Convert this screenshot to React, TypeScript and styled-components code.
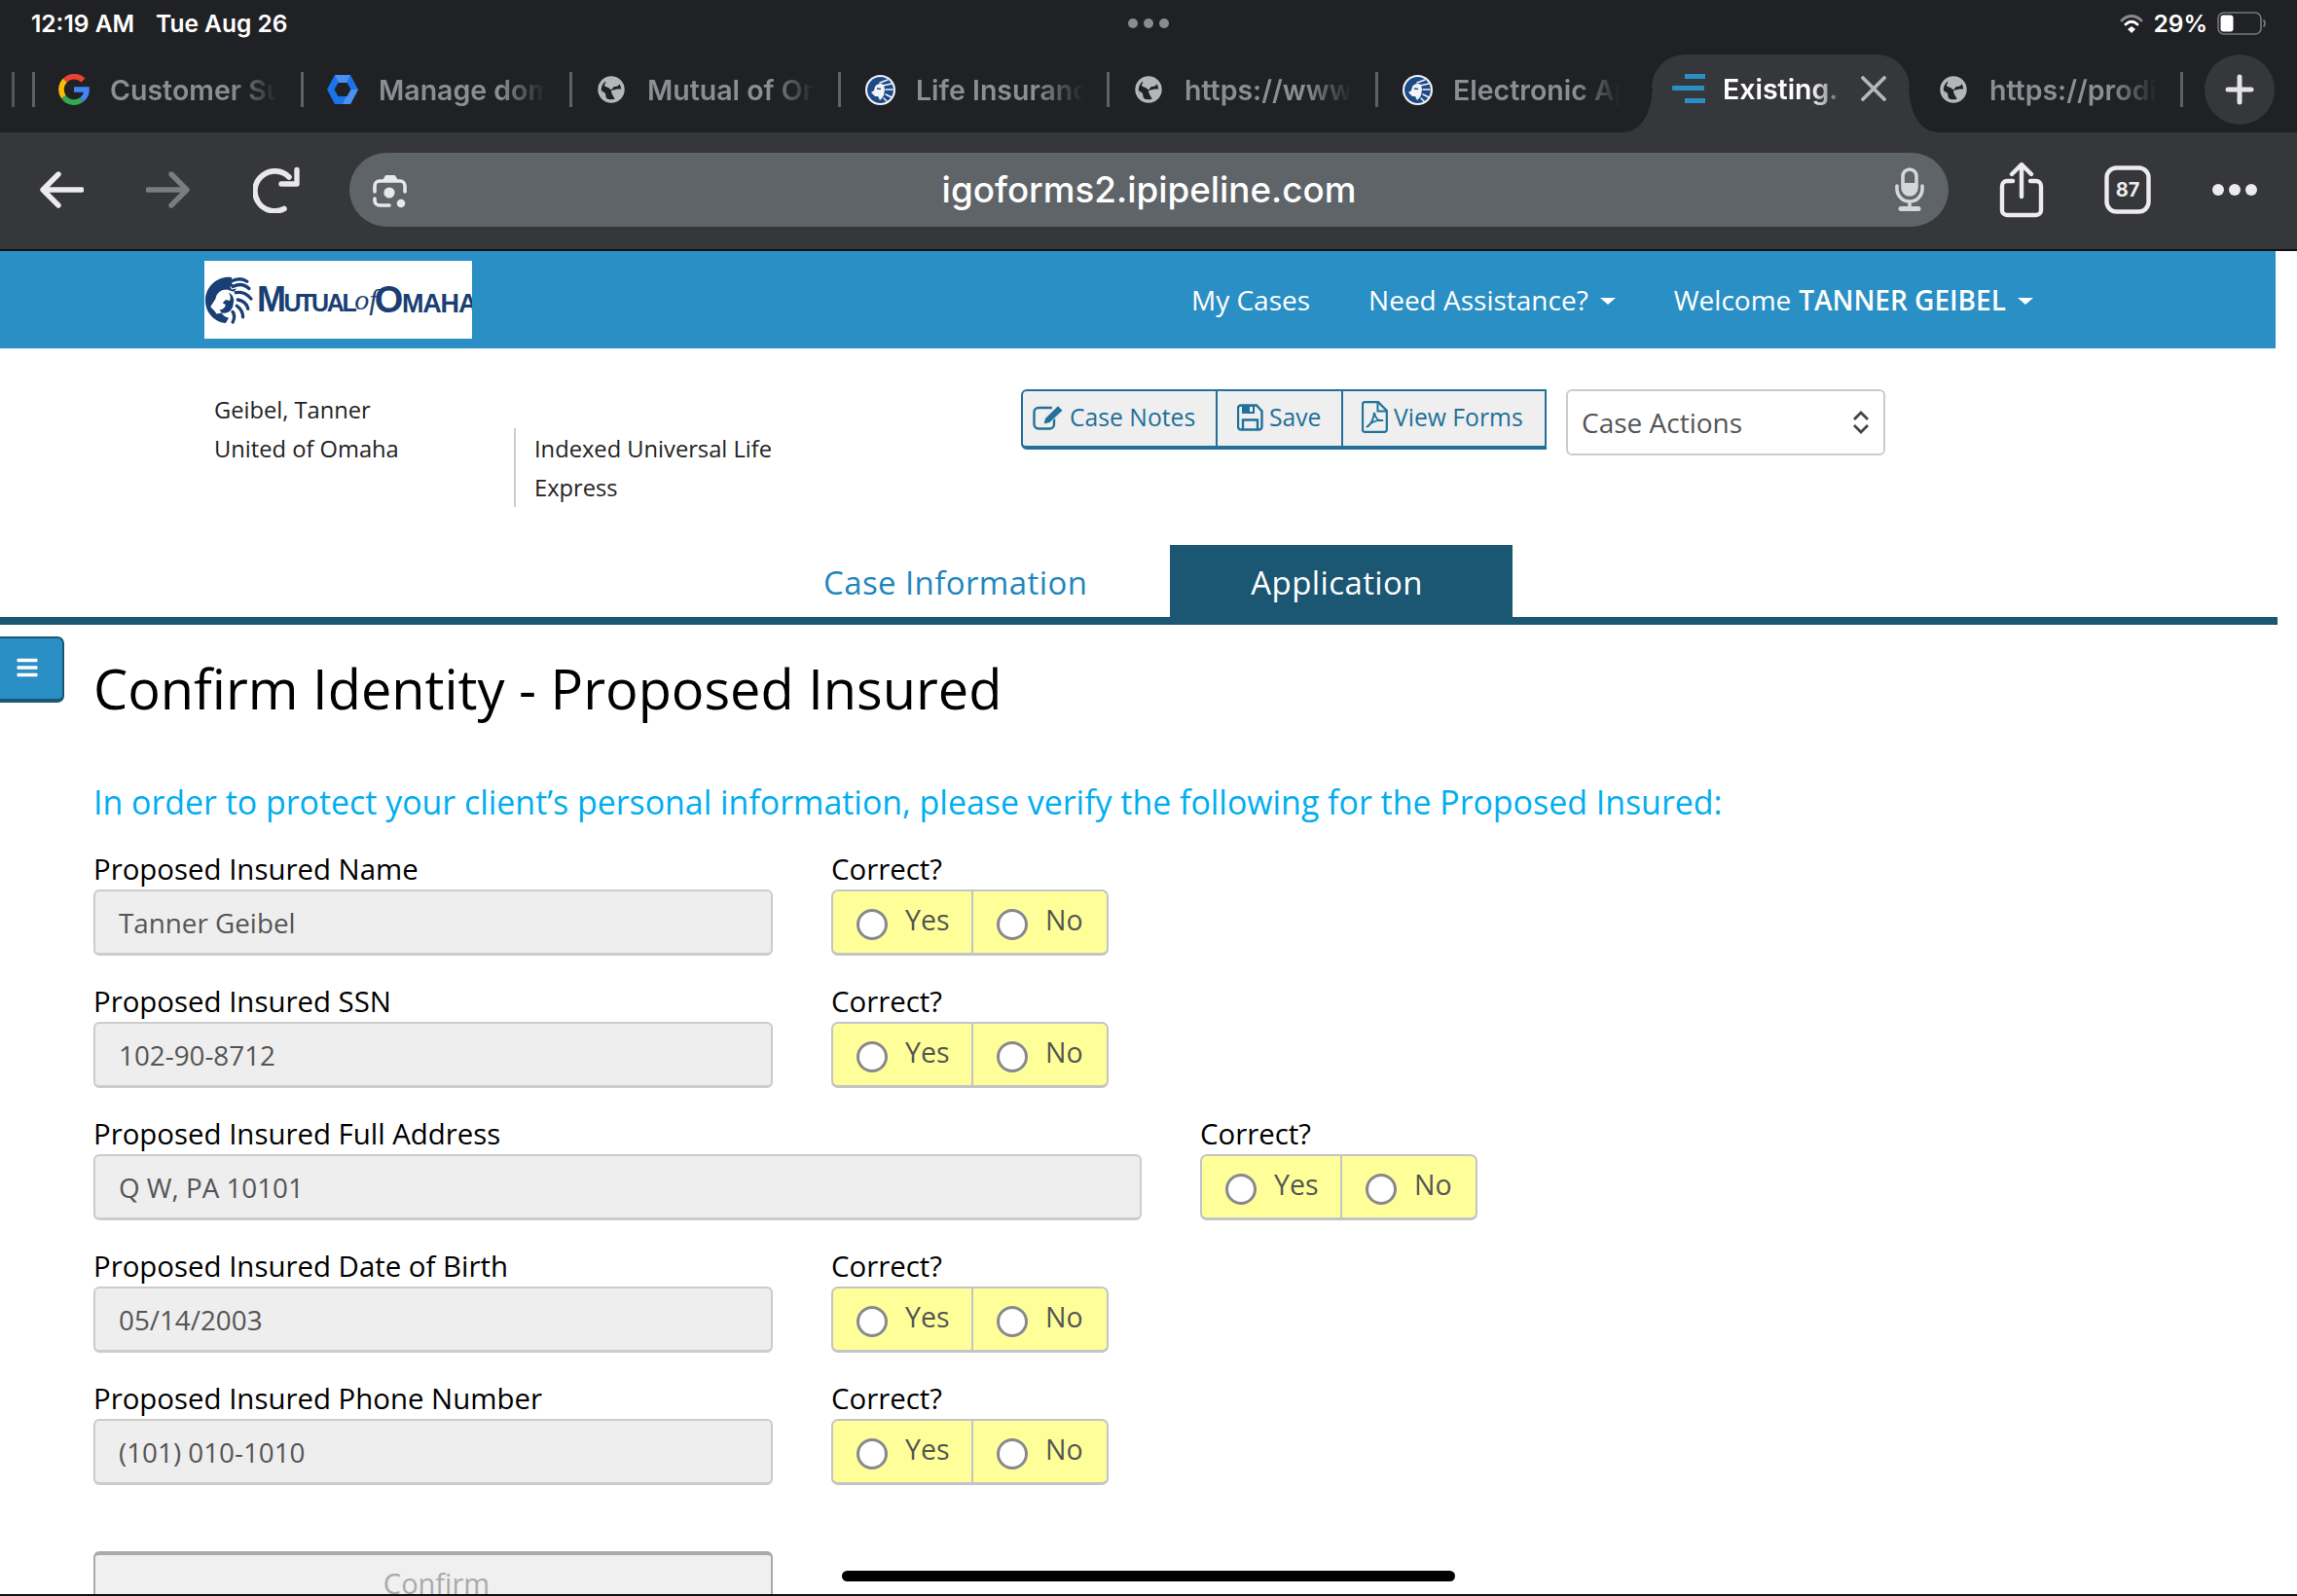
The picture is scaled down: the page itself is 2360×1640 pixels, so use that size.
import React from "react";
import styled, { createGlobalStyle } from "styled-components";
import { FaBars } from "react-icons/fa";

const Global = createGlobalStyle`
  html, body { margin: 0; padding: 0; background: #fff; overflow: hidden; }
  * { box-sizing: border-box; }
  svg { flex: none; display: block; }
`;

const SF = `Inter, "Liberation Sans", sans-serif`;
const OS = `"Open Sans", "Noto Sans", sans-serif`;
const NAVY = "#1a3f74";
const BTN = "#21719b";

const Root = styled.div`
  position: relative;
  width: 2360px;
  height: 1640px;
  overflow: hidden;
  background: #fff;
  font-family: ${OS};
`;
const StatusBar = styled.div`
  height: 48px;
  background: #202125;
  display: grid;
  grid-template-columns: 1fr auto 1fr;
  align-items: center;
  padding: 0 32px;
  color: #fff;
  font: 600 24.5px ${SF};
`;
const StatusLeft = styled.div`
  display: flex;
  gap: 22px;
`;
const StatusDots = styled.div`
  display: flex;
  gap: 6px;
`;
const StatusDot = styled.i`
  width: 10px;
  height: 10px;
  border-radius: 50%;
  background: #8a8b8e;
`;
const StatusRight = styled.div`
  display: flex;
  align-items: center;
  justify-content: flex-end;
  gap: 10px;
`;
const TabStrip = styled.div`
  height: 88px;
  background: #202125;
  display: flex;
  align-items: flex-start;
  padding-left: 12px;
`;
const TabStub = styled.div`
  flex: none;
  width: 24px;
  height: 36px;
  margin-top: 26px;
  border-left: 3px solid #55565a;
  border-right: 3px solid #5f6064;
`;
const Tab = styled.div<{ $noSep?: boolean }>`
  flex: none;
  width: 276px;
  height: 36px;
  margin-top: 26px;
  padding-left: 24px;
  display: flex;
  align-items: center;
  gap: 21px;
  border-right: ${(p) => (p.$noSep ? "0" : "3px solid #5f6064")};
  color: #8d8e93;
  font: 600 28.5px ${SF};
`;
const TabIconSlot = styled.span`
  flex: none;
  width: 32px;
  height: 32px;
  display: flex;
  align-items: center;
  justify-content: center;
`;
const TabTitle = styled.span`
  white-space: nowrap;
  -webkit-mask-image: linear-gradient(90deg, #000 125px, rgba(0, 0, 0, 0.45) 152px, transparent 172px);
  mask-image: linear-gradient(90deg, #000 125px, rgba(0, 0, 0, 0.45) 152px, transparent 172px);
`;
const ActiveTab = styled.div`
  position: relative;
  flex: none;
  width: 265px;
  height: 80px;
  margin: 8px 5px 0 5px;
  padding: 0 24px 10px 21px;
  background: #36373a;
  border-radius: 34px 34px 0 0;
  display: flex;
  align-items: center;
  color: #fff;
  font: 600 28.5px ${SF};
  &::before,
  &::after {
    content: "";
    position: absolute;
    bottom: 0;
    width: 28px;
    height: 46px;
  }
  &::before {
    left: -27px;
    background: radial-gradient(ellipse 28px 46px at 0 0, #202125 98%, #36373a 100%);
  }
  &::after {
    right: -27px;
    background: radial-gradient(ellipse 28px 46px at 100% 0, #202125 98%, #36373a 100%);
  }
`;
const ActiveTitle = styled(TabTitle)`
  flex: 1;
  margin-left: 18px;
  -webkit-mask-image: linear-gradient(90deg, #000 90px, rgba(0, 0, 0, 0.35) 115px);
  mask-image: linear-gradient(90deg, #000 90px, rgba(0, 0, 0, 0.35) 115px);
`;
const NewTab = styled.div`
  flex: none;
  width: 72px;
  height: 72px;
  margin: 8px 0 0 22px;
  border-radius: 50%;
  background: #36373a;
  display: flex;
  align-items: center;
  justify-content: center;
`;
const Toolbar = styled.div`
  height: 122px;
  background: #36373a;
  border-bottom: 2px solid #111;
  display: flex;
  align-items: center;
  padding: 0 40px 2px 40px;
`;
const ToolIcon = styled.span<{ $mr: number }>`
  flex: none;
  display: flex;
  margin-right: ${(p) => p.$mr}px;
`;
const AddressBar = styled.div`
  flex: none;
  width: 1643px;
  height: 76px;
  margin-right: 52px;
  border-radius: 38px;
  background: #5f6468;
  display: grid;
  grid-template-columns: 100px 1fr 100px;
  align-items: center;
  color: #fff;
  font: 500 36.8px ${SF};
  text-align: center;
`;
const AddressText = styled.span`
  margin-top: -2px;
`;
const LensSlot = styled.span`
  display: flex;
  padding-left: 23px;
`;
const MicSlot = styled.span`
  display: flex;
  justify-content: flex-end;
  padding-right: 24px;
`;
const SiteHeader = styled.header`
  width: 2338px;
  height: 100px;
  background: #2a8fc4;
  display: flex;
  align-items: center;
  padding-left: 210px;
  color: #fff;
  font-size: 28px;
`;
const Logo = styled.div`
  flex: none;
  width: 275px;
  height: 80px;
  margin-right: 739px;
  background: #fff;
  display: flex;
  align-items: center;
  overflow: hidden;
  white-space: nowrap;
  color: ${NAVY};
`;
const LogoWord = styled.span`
  font: 700 36px "Liberation Sans", sans-serif;
  font-variant: small-caps;
  letter-spacing: -2.4px;
`;
const LogoWordFirst = styled(LogoWord)`
  margin-left: 4px;
`;
const LogoWordLast = styled(LogoWord)`
  font-size: 38px;
  letter-spacing: -1.2px;
`;
const LogoOf = styled.span`
  font: italic 400 30px "Liberation Serif", serif;
  margin: 0 -3px 0 0;
`;
const NavItem = styled.span<{ $mr: number }>`
  margin-right: ${(p) => p.$mr}px;
  display: flex;
  align-items: center;
  white-space: nowrap;
`;
const NavStrong = styled.b`
  margin-left: 0.28em;
  font-weight: 600;
`;
const Caret = styled.i`
  display: inline-block;
  margin-left: 12px;
  margin-top: 3px;
  border-left: 8px solid transparent;
  border-right: 8px solid transparent;
  border-top: 7px solid #fff;
`;
const InfoBar = styled.section`
  height: 202px;
  padding-left: 220px;
  display: flex;
  align-items: flex-start;
  font-size: 23.7px;
  line-height: 40px;
  color: #222;
`;
const InfoName = styled.div`
  flex: none;
  width: 308px;
  padding-top: 43px;
`;
const InfoPlan = styled.div`
  flex: none;
  width: 521px;
  margin-top: 82px;
  padding: 1px 0 0 19px;
  border-left: 2px solid #ccc;
`;
const ActionGroup = styled.div`
  flex: none;
  margin-top: 42px;
  width: 540px;
  height: 62px;
  display: flex;
  background: #efefef;
  border: 2px solid ${BTN};
  border-bottom-width: 4px;
  border-radius: 6px 0 0 6px;
`;
const ActionButton = styled.div<{ $w: number; $pl: number; $last?: boolean }>`
  flex: none;
  width: ${(p) => p.$w}px;
  padding: 0 0 3px ${(p) => p.$pl}px;
  display: flex;
  align-items: center;
  gap: 6px;
  color: #1f6f99;
  font-size: 24.7px;
  font-weight: 500;
  border-right: ${(p) => (p.$last ? "0" : `2px solid ${BTN}`)};
`;
const CaseSelect = styled.div`
  flex: none;
  width: 328px;
  height: 68px;
  margin: 42px 0 0 20px;
  padding: 0 14px 0 14px;
  border: 2px solid #ccc;
  border-radius: 6px;
  display: flex;
  align-items: center;
  justify-content: space-between;
  font-size: 28px;
  color: #555;
`;
const TabsRow = styled.nav`
  width: 2340px;
  height: 82px;
  padding-left: 764px;
  display: flex;
  gap: 3px;
  border-bottom: 8px solid #1b5672;
`;
const PageTab = styled.div<{ $active?: boolean }>`
  padding: ${(p) => (p.$active ? "2px 92px 0 83px" : "2px 82px 0")};
  display: flex;
  align-items: center;
  justify-content: center;
  font-size: 33px;
  letter-spacing: 0.4px;
  color: ${(p) => (p.$active ? "#fff" : "#1f86bd")};
  background: ${(p) => (p.$active ? "#1b5672" : "transparent")};
`;
const Main = styled.main`
  position: relative;
  padding: 27px 0 0 96px;
`;
const SideToggle = styled.div`
  position: absolute;
  left: 0;
  top: 12px;
  width: 66px;
  height: 68px;
  background: #2a8fc4;
  border: 2px solid #1b5672;
  border-left: 0;
  border-bottom-width: 4px;
  border-radius: 0 7px 7px 0;
  display: flex;
  align-items: center;
  padding: 0 0 2px 16px;
  color: #fff;
`;
const Title = styled.h1`
  margin: 0;
  font-size: 55.9px;
  line-height: 76px;
  font-weight: 400;
  color: #000;
`;
const Instruction = styled.p`
  margin: 56px 0 29px;
  font-size: 33.9px;
  line-height: 46px;
  color: #00aeef;
`;
const Rows = styled.div`
  display: flex;
  flex-direction: column;
  gap: 30px;
`;
const Row = styled.div`
  display: flex;
  gap: 60px;
`;
const Field = styled.div<{ $wide?: boolean }>`
  flex: none;
  width: ${(p) => (p.$wide ? 1077 : 698)}px;
`;
const FieldLabel = styled.div`
  height: 34px;
  margin-bottom: 4px;
  line-height: 34px;
  font-size: 29.4px;
  font-weight: 500;
  color: #000;
`;
const Input = styled.div`
  height: 68px;
  padding-left: 24px;
  display: flex;
  align-items: center;
  background: #eee;
  border: 2px solid #ccc;
  border-bottom-width: 3px;
  border-radius: 6px;
  font-size: 27.8px;
  color: #555;
`;
const Toggle = styled.div`
  width: 285px;
  height: 68px;
  display: flex;
  background: #ff9;
  border: 2px solid #c4c4c8;
  border-bottom-width: 3px;
  border-radius: 7px;
`;
const ToggleOption = styled.div<{ $first?: boolean }>`
  flex: ${(p) => (p.$first ? "0 0 144px" : "1")};
  display: flex;
  align-items: center;
  gap: 18px;
  padding: 0 0 0 24px;
  font-size: 28.5px;
  font-weight: 500;
  color: #555;
  border-right: ${(p) => (p.$first ? "2px solid #c4c4c8" : "0")};
`;
const ToggleText = styled.span`
  margin-top: -6px;
`;
const Radio = styled.i`
  flex: none;
  width: 32px;
  height: 32px;
  margin-top: 5px;
  border-radius: 50%;
  background: #fff;
  border: 3px solid #88888e;
`;
const ConfirmButton = styled.div`
  width: 698px;
  height: 100px;
  margin-top: 68px;
  padding: 9px 0 0 7px;
  text-align: center;
  background: #f0f0f0;
  border: 2px solid #aaa;
  border-top-width: 4px;
  border-radius: 6px;
  color: #aaa;
  font-size: 29px;
`;
const HomeIndicator = styled.div`
  position: absolute;
  left: 865px;
  top: 1614px;
  width: 630px;
  height: 11px;
  border-radius: 6px;
  background: #000;
`;
const BottomEdge = styled.div`
  position: absolute;
  left: 0;
  right: 0;
  bottom: 0;
  height: 2px;
  background: #111;
`;

const GoogleG = () => (
  <svg width="32" height="32" viewBox="0 0 32 32" fill="none" strokeWidth="5.6">
    <path d="M25.5 6.5A13 13 0 0 0 6.8 6.8" stroke="#ea4335" />
    <path d="M6.8 6.8A13 13 0 0 0 5.4 23.6" stroke="#fbbc05" />
    <path d="M5.4 23.6A13 13 0 0 0 24 26.4" stroke="#34a853" />
    <path d="M24 26.4A13 13 0 0 0 29 16H16" stroke="#4285f4" />
  </svg>
);

const Globe = () => (
  <svg width="28" height="28" viewBox="0 0 28 28">
    <circle cx="14" cy="14" r="12" fill="#202125" stroke="#b5b6b9" strokeWidth="3.4" />
    <path d="M8 4.5C12 2.5 19 3 23 7c-1 4-4 4-6 4-2 1-1 3-4 3-1-3-5-2-6-4 0-2 2-2 1-5.5z" fill="#b5b6b9" />
    <path d="M14 15c4-1 8-2 11-1 0 5-3 9-7 11-1-4-4-6-4-10zM4 15l4 3 1 6c-3-2-5-5-5-9z" fill="#b5b6b9" />
  </svg>
);

const LionMark = ({ size, color = NAVY }: { size: number; color?: string }) => (
  <svg width={size} height={size} viewBox="0 0 48 48">
    <path
      d="M27 2C14 0 2 10 1 23c-1 12 8 23 20 24l3-5c-4-1-6-3-7-5l-5 1-2-3-4-4 5-8c1-6 6-9 11-9l7 2 3-3-5 1-2-3 5 0-3-3z"
      fill={color}
    />
    <path d="M17 37c5 1 9-1 11-6l1-6c0-4-2-7-5-8 2 3 2 6 1 8l-4-1-3 3 3 2c-1 3-3 5-6 5z" fill={color} />
    <path
      d="M26 6c6-3 12-3 16 0M28 11c6-3 12-2 16 2M31 17c5-1 10 0 15 6M33 24c5 1 9 4 10 9M32 30c4 3 6 6 6 11M28 36c2 3 2 6 0 10"
      fill="none"
      stroke={color}
      strokeWidth="3.2"
      strokeLinecap="round"
    />
  </svg>
);

const LionFav = () => (
  <svg width="31" height="31" viewBox="0 0 31 31">
    <circle cx="15.5" cy="15.5" r="15.5" fill="#f2f4f8" />
    <circle cx="15.5" cy="15.5" r="13.4" fill="#1c4a86" />
    <path d="M6 18l3-2 1-4c2-3 6-4 9-2l1 5-1 6c-1 2-2 3-4 5l-2-4-3 0-2-2z" fill="#f2f4f8" />
    <path d="M15 8l8-3M18 11l9-2M21 15l7 0M21 20l6 3M19 24l4 4" stroke="#f2f4f8" strokeWidth="1.5" strokeLinecap="round" />
    <path d="M12 14l4 .5" stroke="#1c4a86" strokeWidth="1.3" />
  </svg>
);

const WorkspaceIcon = () => (
  <svg width="32" height="30" viewBox="0 0 32 30">
    <path d="M8 0h16l8 15-8 15H8L0 15z" fill="#1a73e8" />
    <path d="M8 0h16l-4 8h-8zM16 30h8l8-15h-9z" fill="#4a90f0" />
    <path d="M11.5 8h9l4 7-4 7h-9l-4-7z" fill="#202125" />
  </svg>
);

const ActiveFav = () => (
  <svg width="34" height="32" viewBox="0 0 34 32">
    <rect x="13" y="1" width="21" height="5" fill="#2a8fc4" />
    <rect x="0" y="13" width="33" height="5" rx="1" fill="#2a8fc4" />
    <rect x="13" y="26" width="21" height="5" fill="#2a8fc4" />
  </svg>
);

const CloseX = () => (
  <svg width="26" height="26" viewBox="0 0 26 26">
    <path d="M2 2l22 22M24 2L2 24" stroke="#b6b7ba" strokeWidth="3.8" strokeLinecap="round" />
  </svg>
);

const Plus = () => (
  <svg width="30" height="32" viewBox="0 0 30 32">
    <path d="M15 3v26M3 16h24" stroke="#e4e4e6" strokeWidth="5" strokeLinecap="round" />
  </svg>
);

const Wifi = () => (
  <svg width="24" height="22" viewBox="0 0 24 22">
    <path d="M2 8c6-6 14-6 20 0" fill="none" stroke="#8a8b8e" strokeWidth="3" strokeLinecap="round" />
    <path d="M6 12c4-3.6 8-3.6 12 0" fill="none" stroke="#fff" strokeWidth="3" strokeLinecap="round" />
    <path d="M12 14l4 3-4 4-4-4z" fill="#fff" />
  </svg>
);

const Battery = () => (
  <svg width="50" height="24" viewBox="0 0 50 24">
    <rect x="1" y="1" width="44" height="22" rx="6" fill="none" stroke="#77787c" strokeWidth="1.6" />
    <rect x="3.5" y="3.5" width="13" height="17" rx="3" fill="#fff" />
    <path d="M47.5 8.5c2 1.6 2 5.4 0 7" fill="none" stroke="#77787c" strokeWidth="1.8" />
  </svg>
);

const Arrow = ({ color, flip }: { color: string; flip?: boolean }) => (
  <svg width="46" height="38" viewBox="0 0 46 38" style={flip ? { transform: "scaleX(-1)" } : undefined}>
    <path d="M20 3L4 19l16 16M5 19h39" fill="none" stroke={color} strokeWidth="5.4" strokeLinecap="round" strokeLinejoin="round" />
  </svg>
);

const Reload = () => (
  <svg width="48" height="48" viewBox="0 0 48 48">
    <path d="M32 43.5A20.5 20.5 0 1 1 37 11" fill="none" stroke="#e8e8ea" strokeWidth="5.6" strokeLinecap="round" />
    <path d="M45 3.5V18H29" fill="none" stroke="#e8e8ea" strokeWidth="5.4" strokeLinecap="round" strokeLinejoin="round" />
  </svg>
);

const Lens = () => (
  <svg width="38" height="37" viewBox="0 0 38 37">
    <path d="M10 10l3.5-6a2 2 0 0 1 1.5-1h8a2 2 0 0 1 1.5 1l3.5 6z" fill="#e8e8ea" />
    <path d="M3 20v-6a5 5 0 0 1 5-5h21a5 5 0 0 1 5 5v6" fill="none" stroke="#e8e8ea" strokeWidth="3.6" strokeLinecap="round" />
    <path d="M3 27v2a5 5 0 0 0 5 5h10" fill="none" stroke="#e8e8ea" strokeWidth="3.6" strokeLinecap="round" />
    <circle cx="18" cy="21" r="5.6" fill="#e8e8ea" />
    <circle cx="30" cy="32" r="4.3" fill="#e8e8ea" />
  </svg>
);

const Mic = () => (
  <svg width="32" height="46" viewBox="0 0 32 46">
    <rect x="9" y="2" width="14" height="26" rx="7" fill="none" stroke="#d5d6d8" strokeWidth="3.6" />
    <path d="M9 16h14v5a7 7 0 0 1-14 0z" fill="#d5d6d8" />
    <path d="M3 19v3a13 13 0 0 0 26 0v-3M16 35v5" fill="none" stroke="#d5d6d8" strokeWidth="3.6" strokeLinecap="round" />
    <path d="M7 42.5h18" stroke="#d5d6d8" strokeWidth="5" strokeLinecap="round" />
  </svg>
);

const Share = () => (
  <svg width="46" height="58" viewBox="0 0 46 58">
    <path d="M14 20H8a5 5 0 0 0-5 5v25a5 5 0 0 0 5 5h30a5 5 0 0 0 5-5V25a5 5 0 0 0-5-5h-6" fill="none" stroke="#ececee" strokeWidth="4.4" strokeLinecap="round" />
    <path d="M23 36V4M13 13l10-10 10 10" fill="none" stroke="#ececee" strokeWidth="4.4" strokeLinecap="round" strokeLinejoin="round" />
  </svg>
);

const TabCount = () => (
  <svg width="48" height="50" viewBox="0 0 48 50">
    <rect x="2.5" y="2.5" width="43" height="45" rx="10" fill="none" stroke="#ececee" strokeWidth="4.4" />
    <text x="24" y="32" textAnchor="middle" fontSize="20" fontWeight="700" fontFamily="Inter, sans-serif" fill="#ececee">
      87
    </text>
  </svg>
);

const MoreDots = () => (
  <svg width="48" height="14" viewBox="0 0 48 14">
    <circle cx="7" cy="7" r="6" fill="#ececee" />
    <circle cx="24" cy="7" r="6" fill="#ececee" />
    <circle cx="41" cy="7" r="6" fill="#ececee" />
  </svg>
);

const Chevrons = () => (
  <svg width="18" height="24" viewBox="0 0 18 24">
    <path d="M2 9l7-7 7 7M2 15l7 7 7-7" fill="none" stroke="#444" strokeWidth="2.8" />
  </svg>
);

const EditIcon = () => (
  <svg width="32" height="26" viewBox="0 0 32 26">
    <path d="M22 14v6a4.5 4.5 0 0 1-4.5 4.5H6A4.5 4.5 0 0 1 1.5 20V7.5A4.5 4.5 0 0 1 6 3h13" fill="none" stroke={BTN} strokeWidth="2.4" strokeLinecap="round" />
    <path d="M11 20l1.5-6L26 .8l5 5L17.5 18.5z" fill={BTN} stroke="#efefef" strokeWidth="1" />
  </svg>
);

const SaveIcon = () => (
  <svg width="27" height="28" viewBox="0 0 27 28">
    <path d="M4 1.5h16l5.5 6V23.5a3 3 0 0 1-3 3H4a3 3 0 0 1-3-3v-19a3 3 0 0 1 3-3z" fill="none" stroke={BTN} strokeWidth="2.4" />
    <path d="M5 2h13v8H5z" fill={BTN} />
    <path d="M13 3h3v5h-3z" fill="#efefef" />
    <path d="M6 26v-9.5h15V26" fill="none" stroke={BTN} strokeWidth="2.4" />
  </svg>
);

const PdfIcon = () => (
  <svg width="27" height="33" viewBox="0 0 27 33">
    <path d="M3 1.2h14L25.8 10v19.5a2.3 2.3 0 0 1-2.3 2.3H3a2 2 0 0 1-2-2V3.2a2 2 0 0 1 2-2z" fill="none" stroke={BTN} strokeWidth="2.2" />
    <path d="M16.5 1.5V10.5H25.5" fill="none" stroke={BTN} strokeWidth="2" />
    <path d="M5 27c4-2 7-8 8-15 1 6 4 9 9 8-6-1-13 2-17 7z" fill="none" stroke={BTN} strokeWidth="1.8" />
  </svg>
);

const rows = [
  { label: "Proposed Insured Name", value: "Tanner Geibel" },
  { label: "Proposed Insured SSN", value: "102-90-8712" },
  { label: "Proposed Insured Full Address", value: "Q W, PA 10101", wide: true },
  { label: "Proposed Insured Date of Birth", value: "05/14/2003" },
  { label: "Proposed Insured Phone Number", value: "(101) 010-1010" },
];

const tabs: { icon: React.ReactNode; title: string }[] = [
  { icon: <GoogleG />, title: "Customer Su" },
  { icon: <WorkspaceIcon />, title: "Manage dom" },
  { icon: <Globe />, title: "Mutual of On" },
  { icon: <LionFav />, title: "Life Insuranc" },
  { icon: <Globe />, title: "https://www" },
  { icon: <LionFav />, title: "Electronic Ap" },
];

export default function App() {
  return (
    <Root>
      <Global />
      <StatusBar>
        <StatusLeft>
          <span>12:19 AM</span>
          <span>Tue Aug 26</span>
        </StatusLeft>
        <StatusDots>
          <StatusDot />
          <StatusDot />
          <StatusDot />
        </StatusDots>
        <StatusRight>
          <Wifi />
          <span>29%</span>
          <Battery />
        </StatusRight>
      </StatusBar>
      <TabStrip>
        <TabStub />
        {tabs.map((t, i) => (
          <Tab key={t.title} $noSep={i === tabs.length - 1}>
            <TabIconSlot>{t.icon}</TabIconSlot>
            <TabTitle>{t.title}</TabTitle>
          </Tab>
        ))}
        <ActiveTab>
          <ActiveFav />
          <ActiveTitle>Existing.</ActiveTitle>
          <CloseX />
        </ActiveTab>
        <Tab>
          <TabIconSlot>
            <Globe />
          </TabIconSlot>
          <TabTitle>https://prodi</TabTitle>
        </Tab>
        <NewTab>
          <Plus />
        </NewTab>
      </TabStrip>
      <Toolbar>
        <ToolIcon $mr={64}>
          <Arrow color="#ececee" />
        </ToolIcon>
        <ToolIcon $mr={64}>
          <Arrow color="#7b7c80" flip />
        </ToolIcon>
        <ToolIcon $mr={51}>
          <Reload />
        </ToolIcon>
        <AddressBar>
          <LensSlot>
            <Lens />
          </LensSlot>
          <AddressText>igoforms2.ipipeline.com</AddressText>
          <MicSlot>
            <Mic />
          </MicSlot>
        </AddressBar>
        <ToolIcon $mr={62}>
          <Share />
        </ToolIcon>
        <ToolIcon $mr={62}>
          <TabCount />
        </ToolIcon>
        <ToolIcon $mr={0}>
          <MoreDots />
        </ToolIcon>
      </Toolbar>
      <SiteHeader>
        <Logo>
          <LionMark size={50} />
          <LogoWordFirst>Mutual</LogoWordFirst>
          <LogoOf>of</LogoOf>
          <LogoWordLast>Omaha</LogoWordLast>
        </Logo>
        <NavItem $mr={60}>My Cases</NavItem>
        <NavItem $mr={60}>
          Need Assistance?
          <Caret />
        </NavItem>
        <NavItem $mr={0}>
          Welcome<NavStrong>TANNER GEIBEL</NavStrong>
          <Caret />
        </NavItem>
      </SiteHeader>
      <InfoBar>
        <InfoName>
          Geibel, Tanner
          <br />
          United of Omaha
        </InfoName>
        <InfoPlan>
          Indexed Universal Life
          <br />
          Express
        </InfoPlan>
        <ActionGroup>
          <ActionButton $w={200} $pl={10}>
            <EditIcon />
            Case Notes
          </ActionButton>
          <ActionButton $w={129} $pl={20}>
            <SaveIcon />
            Save
          </ActionButton>
          <ActionButton $w={207} $pl={19} $last>
            <PdfIcon />
            View Forms
          </ActionButton>
        </ActionGroup>
        <CaseSelect>
          Case Actions
          <Chevrons />
        </CaseSelect>
      </InfoBar>
      <TabsRow>
        <PageTab>Case Information</PageTab>
        <PageTab $active>Application</PageTab>
      </TabsRow>
      <Main>
        <SideToggle>
          <FaBars size={24} />
        </SideToggle>
        <Title>Confirm Identity - Proposed Insured</Title>
        <Instruction>
          In order to protect your client’s personal information, please verify the following for the Proposed Insured:
        </Instruction>
        <Rows>
          {rows.map((r) => (
            <Row key={r.label}>
              <Field $wide={r.wide}>
                <FieldLabel>{r.label}</FieldLabel>
                <Input>{r.value}</Input>
              </Field>
              <div>
                <FieldLabel>Correct?</FieldLabel>
                <Toggle>
                  <ToggleOption $first>
                    <Radio />
                    <ToggleText>Yes</ToggleText>
                  </ToggleOption>
                  <ToggleOption>
                    <Radio />
                    <ToggleText>No</ToggleText>
                  </ToggleOption>
                </Toggle>
              </div>
            </Row>
          ))}
        </Rows>
        <ConfirmButton>Confirm</ConfirmButton>
      </Main>
      <HomeIndicator />
      <BottomEdge />
    </Root>
  );
}
